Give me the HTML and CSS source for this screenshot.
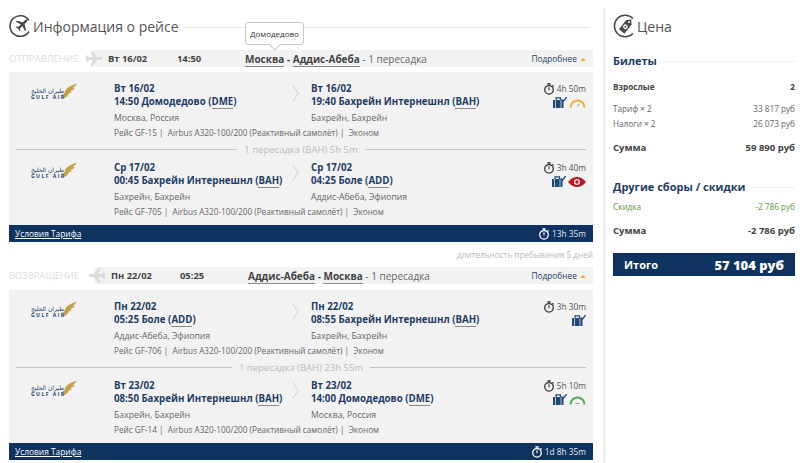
FILE: index.html
```html
<!doctype html>
<html>
  <head>
    <meta charset="UTF-8" />
    <title>Информация о рейсе</title>
    <link rel="stylesheet" href="styles.css">
  </head>
  <body>
    <svg class="defs" width="0" height="0">
      <defs>
        <symbol id="plane" viewBox="0 0 24 24">
          <path d="M21.5 3c-1-1-2.600-.8-3.700.3L14.300 6.800 4.500 4.400 3 5.900l8 4.300-3.800 3.800-3-.4L3 15l3.700 2.100L8.900 21l1.200-1.200-.4-3 3.800-3.800 4.300 8 1.500-1.500-2.400-9.800 3.500-3.500c1.100-1.100 2.100-3.700 1.100-2.700z" />
        </symbol>
        <symbol id="clock" viewBox="0 0 14 14">
          <circle cx="7" cy="8" r="5" fill="none" stroke="currentColor" stroke-width="1.500" />
          <path d="M5 1h4M7 1v2M7 5v3.500" fill="none" stroke="currentColor" stroke-width="1.300" />
          <path d="M11 2.500l1.500 1.500" stroke="currentColor" stroke-width="1.200" />
        </symbol>
        <symbol id="bag" viewBox="0 0 14 11">
          <path d="M0 3h10.500v8H0z" fill="#1c4a7a" />
          <path d="M3 3V.8h4.500V3" fill="none" stroke="#1c4a7a" stroke-width="1.200" />
          <path d="M2.500 3v8M8 3v8" stroke="#f2f2f2" stroke-width=".7" />
          <path d="M8.500 2.500l1.800 1.800L13.800 0" fill="none" stroke="#1c4a7a" stroke-width="1.400" />
        </symbol>
        <symbol id="falcon" viewBox="0 0 20 20">
          <path d="M19.500.5C15 2 11.500 3.500 8.500 6 6 8 5 10 4.500 12.500L0 15.500l3.500-.5L2 19.500c3-1 5-2 6.500-4 1-1.300 1.700-2.500 2-3.500 1 .5 2 .5 3 0-1-.5-1.500-1.300-1.500-2 2.500-.5 4.500-2 5.500-4-1 .5-2 .7-2.800.5C16.500 5 18.500 3 19.500.5z" />
        </symbol>
      </defs>
    </svg>

    <div class="page">
      <main class="flights">
        <div class="heading">
          <svg class="heading-icon" viewBox="0 0 24 24">
            <path d="M20 6.500A10.300 10.300 0 1 0 20 17.500" fill="none" stroke="#4a4a4a" stroke-width="1.600" />
            <use href="#plane" x="5" y="4" width="15" height="15" fill="#4a4a4a" />
          </svg>
          <h1>Информация о рейсе</h1>
          <span class="rule"></span>
        </div>

        <div class="summary-row">
          <span class="direction">ОТПРАВЛЕНИЕ</span>
          <svg class="direction-plane" viewBox="0 0 24 24"><path d="M0 10l2-3 3 3h5L7 1h3l6 9h5c2 0 3 1 3 2s-1 2-3 2h-5l-6 9H7l3-9H5l-3 3-2-3 1-2z" /></svg>
          <div class="summary">
            <b class="summary-date">Вт 16/02</b>
            <b class="summary-time">14:50</b>
            <span class="route">
              <span class="tooltip">Домодедово</span>
              <b class="abbr">Москва</b> <b>-</b> <b class="abbr">Аддис-Абеба</b> - 1 пересадка
            </span>
            <a class="more">Подробнее <i class="caret"></i></a>
          </div>
        </div>

        <section class="card">
          <div class="segment">
            <div class="logo">
              <svg class="falcon"><use href="#falcon" /></svg>
              <span class="logo-ar" lang="ar">طيران الخليج</span>
              <span class="logo-en">GULF AIR</span>
            </div>
            <div class="point">
              <strong>Вт 16/02<br>14:50 Домодедово (<span class="abbr">DME</span>)</strong>
              <p>Москва, Россия</p>
              <p class="flight">Рейс GF-15&nbsp;|&nbsp; Airbus A320-100/200 (Реактивный самолёт)&nbsp;|&nbsp; Эконом</p>
            </div>
            <svg class="chevron" viewBox="0 0 8 20"><path d="M1 1l6 9-6 9" /></svg>
            <div class="point">
              <strong>Вт 16/02<br>19:40 Бахрейн Интернешнл (<span class="abbr">BAH</span>)</strong>
              <p>Бахрейн, Бахрейн</p>
            </div>
            <div class="meta">
              <span class="duration"><svg class="clock"><use href="#clock" /></svg>4h 50m</span>
              <span class="meta-icons">
                <svg class="bag"><use href="#bag" /></svg>
                <svg class="gauge" viewBox="0 0 17 10"><path d="M1.500 9.500a7 7 0 0 1 14 0" stroke="#f0ac35" /><path d="M8 8.500l2.500-3" stroke="#999" stroke-width="1" /></svg>
              </span>
            </div>
          </div>
          <div class="layover"><span>1 пересадка (BAH) 5h 5m</span></div>
          <div class="segment">
            <div class="logo">
              <svg class="falcon"><use href="#falcon" /></svg>
              <span class="logo-ar" lang="ar">طيران الخليج</span>
              <span class="logo-en">GULF AIR</span>
            </div>
            <div class="point">
              <strong>Ср 17/02<br>00:45 Бахрейн Интернешнл (<span class="abbr">BAH</span>)</strong>
              <p>Бахрейн, Бахрейн</p>
              <p class="flight">Рейс GF-705&nbsp;|&nbsp; Airbus A320-100/200 (Реактивный самолёт)&nbsp;|&nbsp; Эконом</p>
            </div>
            <svg class="chevron" viewBox="0 0 8 20"><path d="M1 1l6 9-6 9" /></svg>
            <div class="point">
              <strong>Ср 17/02<br>04:25 Боле (<span class="abbr">ADD</span>)</strong>
              <p>Аддис-Абеба, Эфиопия</p>
            </div>
            <div class="meta">
              <span class="duration"><svg class="clock"><use href="#clock" /></svg>3h 40m</span>
              <span class="meta-icons">
                <svg class="bag"><use href="#bag" /></svg>
                <svg class="eye" viewBox="0 0 18 10"><path d="M0 5c3-3.500 5.500-5 9-5s6 1.500 9 5c-3 3.500-5.500 5-9 5S3 8.500 0 5z" fill="#c1121f" /><circle cx="9" cy="5" r="3" fill="#f2f2f2" /><circle cx="9" cy="5" r="1.700" fill="#c1121f" /></svg>
              </span>
            </div>
          </div>
          <div class="card-footer">
            <a>Условия Тарифа</a>
            <span class="duration"><svg class="clock"><use href="#clock" /></svg>13h 35m</span>
          </div>
        </section>

        <div class="stay">длительность пребывания 5 дней</div>

        <div class="summary-row return">
          <span class="direction">ВОЗВРАЩЕНИЕ</span>
          <svg class="direction-plane" viewBox="0 0 24 24"><path d="M0 10l2-3 3 3h5L7 1h3l6 9h5c2 0 3 1 3 2s-1 2-3 2h-5l-6 9H7l3-9H5l-3 3-2-3 1-2z" /></svg>
          <div class="summary">
            <b class="summary-date">Пн 22/02</b>
            <b class="summary-time">05:25</b>
            <span class="route">
              <b class="abbr">Аддис-Абеба</b> <b>-</b> <b class="abbr">Москва</b> - 1 пересадка
            </span>
            <a class="more">Подробнее <i class="caret"></i></a>
          </div>
        </div>

        <section class="card">
          <div class="segment">
            <div class="logo">
              <svg class="falcon"><use href="#falcon" /></svg>
              <span class="logo-ar" lang="ar">طيران الخليج</span>
              <span class="logo-en">GULF AIR</span>
            </div>
            <div class="point">
              <strong>Пн 22/02<br>05:25 Боле (<span class="abbr">ADD</span>)</strong>
              <p>Аддис-Абеба, Эфиопия</p>
              <p class="flight">Рейс GF-706&nbsp;|&nbsp; Airbus A320-100/200 (Реактивный самолёт)&nbsp;|&nbsp; Эконом</p>
            </div>
            <svg class="chevron" viewBox="0 0 8 20"><path d="M1 1l6 9-6 9" /></svg>
            <div class="point">
              <strong>Пн 22/02<br>08:55 Бахрейн Интернешнл (<span class="abbr">BAH</span>)</strong>
              <p>Бахрейн, Бахрейн</p>
            </div>
            <div class="meta">
              <span class="duration"><svg class="clock"><use href="#clock" /></svg>3h 30m</span>
              <span class="meta-icons">
                <svg class="bag"><use href="#bag" /></svg>
              </span>
            </div>
          </div>
          <div class="layover"><span>1 пересадка (BAH) 23h 55m</span></div>
          <div class="segment">
            <div class="logo">
              <svg class="falcon"><use href="#falcon" /></svg>
              <span class="logo-ar" lang="ar">طيران الخليج</span>
              <span class="logo-en">GULF AIR</span>
            </div>
            <div class="point">
              <strong>Вт 23/02<br>08:50 Бахрейн Интернешнл (<span class="abbr">BAH</span>)</strong>
              <p>Бахрейн, Бахрейн</p>
              <p class="flight">Рейс GF-14&nbsp;|&nbsp; Airbus A320-100/200 (Реактивный самолёт)&nbsp;|&nbsp; Эконом</p>
            </div>
            <svg class="chevron" viewBox="0 0 8 20"><path d="M1 1l6 9-6 9" /></svg>
            <div class="point">
              <strong>Вт 23/02<br>14:00 Домодедово (<span class="abbr">DME</span>)</strong>
              <p>Москва, Россия</p>
            </div>
            <div class="meta">
              <span class="duration"><svg class="clock"><use href="#clock" /></svg>5h 10m</span>
              <span class="meta-icons">
                <svg class="bag"><use href="#bag" /></svg>
                <svg class="gauge" viewBox="0 0 17 10"><path d="M1.500 9.500a7 7 0 0 1 14 0" stroke="#4caf50" /><path d="M6.500 8.500h4" stroke="#999" stroke-width="1" /></svg>
              </span>
            </div>
          </div>
          <div class="card-footer">
            <a>Условия Тарифа</a>
            <span class="duration"><svg class="clock"><use href="#clock" /></svg>1d 8h 35m</span>
          </div>
        </section>
      </main>

      <aside class="price">
        <div class="heading">
          <svg class="heading-icon" viewBox="0 0 24 24">
            <path d="M20 4.500A10.800 10.800 0 1 0 20 19.500" fill="none" stroke="#4a4a4a" stroke-width="1.500" />
            <g transform="rotate(38 13 12)">
              <path d="M9.500 7.500L13 3.500l3.500 4V19h-7z" fill="#4a4a4a" />
              <circle cx="13" cy="7" r="1" fill="#fff" />
              <circle cx="13" cy="13" r="2.300" fill="#fff" />
              <circle cx="13" cy="13" r="1" fill="#4a4a4a" />
            </g>
          </svg>
          <h1>Цена</h1>
        </div>

        <h2><span>Билеты</span><i class="rule"></i></h2>
        <div class="line strong"><span>Взрослые</span><span>2</span></div>
        <div class="line fare"><span>Тариф × 2</span><span>33 817 руб</span></div>
        <div class="line fare"><span>Налоги × 2</span><span>26 073 руб</span></div>
        <div class="line total"><span>Сумма</span><span>59 890 руб</span></div>

        <h2 class="other"><span>Другие сборы / скидки</span><i class="rule"></i></h2>
        <div class="line discount"><span>Скидка</span><span>-2 786 руб</span></div>
        <div class="line total"><span>Сумма</span><span>-2 786 руб</span></div>

        <div class="grand-total"><span>Итого</span><b>57 104 руб</b></div>
      </aside>
    </div>
  </body>
</html>
```

FILE: styles.css
```css
body,
html {
  height: 100%;
  margin: 0;
}

body {
  font-family: "Open Sans", "Noto Sans", sans-serif;
  background: #fff;
  color: #444;
  overflow: hidden;
}

.defs {
  display: block;
  height: 0;
}

.page {
  display: flex;
  height: 463px;
  padding-left: 9px;
  box-sizing: border-box;
}

.flights {
  width: 584px;
  flex: none;
}

/* Headings */
.heading {
  display: flex;
  align-items: center;
  height: 28px;
  margin-top: 12px;
}

.heading h1 {
  margin: 0;
  font-size: 14px;
  font-weight: 400;
  color: #555;
  white-space: nowrap;
}

.heading-icon {
  width: 24px;
  height: 24px;
  flex: none;
}

.heading .rule {
  flex: 1;
  height: 1px;
  margin: 3px 3px 0 6px;
  background: #e6e6e6;
}

/* Summary bar above each card */
.summary-row {
  display: flex;
  align-items: center;
  height: 17px;
  margin-top: 10px;
}

.direction {
  width: 72px;
  flex: none;
  font-size: 9.600px;
  color: #ddd;
}

.direction-plane {
  width: 22px;
  height: 17px;
  margin: 0 -11px 0 2px;
  flex: none;
  fill: #dcdcdc;
  position: relative;
}

.return .direction {
  font-size: 9.300px;
}

.return .direction-plane {
  transform: scaleX(-1);
  margin-left: 5px;
  margin-right: -14px;
}

.summary {
  flex: 1;
  display: flex;
  align-items: center;
  height: 17px;
  background: #f2f2f2;
  font-size: 9.400px;
  color: #666;
  padding-left: 14px;
  padding-right: 7px;
}

.return .summary {
  padding-left: 17px;
}

.summary b {
  color: #444;
  font-weight: 700;
}

.summary-date {
  width: 69px;
}

.summary-time {
  width: 68px;
}

.route {
  position: relative;
  flex: 1;
  font-size: 10px;
  white-space: nowrap;
}

.abbr {
  border-bottom: 1px solid #8a8a8a;
}

.more {
  font-size: 8.300px;
  color: #1d3d68;
}

.caret {
  display: inline-block;
  border: 3px solid transparent;
  border-top: 0;
  border-bottom: 3px solid #f0ac35;
  margin-left: 1px;
  vertical-align: 1px;
}

.tooltip {
  position: absolute;
  left: 0;
  top: -30px;
  padding: 3px 4px;
  height: 15px;
  line-height: 15px;
  font-size: 8px;
  color: #333;
  background: #fff;
  border: 1px solid #c8c8c8;
  border-radius: 3px;
}

.tooltip::after {
  content: "";
  position: absolute;
  left: 25px;
  bottom: -5px;
  width: 7px;
  height: 7px;
  background: #fff;
  border-right: 1px solid #c8c8c8;
  border-bottom: 1px solid #c8c8c8;
  transform: rotate(45deg);
}

/* Flight card */
.card {
  margin-top: 5px;
  background: #f2f2f2;
}

.return + .card {
  margin-top: 6px;
}

.segment {
  display: grid;
  grid-template-columns: 105px 176px 21px 1fr auto;
  box-sizing: border-box;
  height: 73px;
  padding: 10px 7px 0 0;
}

.layover + .segment {
  height: 71px;
  padding-top: 7px;
}

.logo {
  position: relative;
  height: 24px;
  color: #1d3d68;
}

.falcon {
  position: absolute;
  left: 52px;
  top: 0;
  width: 16px;
  height: 18px;
  fill: #c9a04a;
}

.logo-ar {
  position: absolute;
  left: 22px;
  top: 4px;
  width: 30px;
  font-family: "DejaVu Sans", sans-serif;
  font-size: 6px;
  line-height: 9px;
  white-space: nowrap;
}

.logo-en {
  position: absolute;
  left: 22px;
  top: 12px;
  font-size: 5px;
  line-height: 7px;
  font-weight: 700;
  letter-spacing: 1.500px;
  white-space: nowrap;
}

.point {
  white-space: nowrap;
}

.point strong {
  display: block;
  font-size: 9.700px;
  line-height: 13px;
  color: #1d3d68;
}

.point p {
  margin: 4px 0 0;
  font-size: 8.700px;
  line-height: 12px;
  color: #666;
}

.point p.flight {
  margin-top: 3px;
  font-size: 8.200px;
}

.chevron {
  width: 7px;
  height: 19px;
  margin: 2px 0 0 2px;
  fill: none;
  stroke: #c8c8c8;
}

.meta {
  display: flex;
  flex-direction: column;
  align-items: flex-end;
  gap: 2px;
}

.duration {
  display: flex;
  align-items: center;
  gap: 2px;
  font-size: 8.300px;
  line-height: 13px;
  color: #555;
}

.clock {
  width: 12px;
  height: 12px;
  color: #333;
}

.meta-icons {
  display: flex;
  align-items: center;
  gap: 2px;
  height: 11px;
}

.bag {
  width: 14px;
  height: 11px;
}

.gauge {
  width: 17px;
  height: 10px;
  fill: none;
  stroke-width: 2;
}

.eye {
  width: 18px;
  height: 10px;
}

.layover {
  display: flex;
  align-items: center;
  gap: 7px;
  height: 9px;
  padding: 0 7px;
  font-size: 9.500px;
  color: #bbb;
}

.layover::before,
.layover::after {
  content: "";
  flex: 1;
  height: 1px;
  background: #c4c4c4;
}

.card-footer {
  display: flex;
  align-items: center;
  justify-content: space-between;
  height: 17px;
  padding: 0 7px 0 6px;
  background: #0f3360;
  font-size: 8.400px;
  color: #fff;
}

.card-footer a {
  text-decoration: underline;
}

.card-footer .duration {
  color: #e5e9ef;
}

.card-footer .clock {
  color: #fff;
}

.stay {
  height: 25px;
  line-height: 26px;
  text-align: right;
  font-size: 8.200px;
  color: #bbb;
}

.stay + .summary-row {
  margin-top: 0;
}

/* Price column */
.price {
  width: 182px;
  margin: 8px 0 0 10px;
  padding-left: 7px;
  border-left: 3px solid #f0f0f0;
}

.price .heading {
  margin-top: 4px;
}

.price h2 {
  display: flex;
  align-items: center;
  margin: 13px 0 0;
  font-size: 11px;
  line-height: 16px;
  font-weight: 700;
  color: #1d3d68;
}

.price h2 .rule {
  flex: 1;
  height: 1px;
  margin-left: 6px;
  background: #efefef;
}

.price h2.other {
  margin-top: 24px;
}

.line {
  display: flex;
  justify-content: space-between;
  font-size: 8.200px;
  line-height: 14px;
  color: #666;
}

.line.fare {
  margin-top: 1px;
}

.line.strong {
  font-weight: 700;
  color: #444;
  margin-top: 11px;
}

.line.strong + .fare {
  margin-top: 8px;
}

.line.total {
  margin-top: 10px;
  font-size: 9.500px;
  font-weight: 700;
  color: #444;
}

.line.discount {
  margin-top: 5px;
  color: #5b9a3c;
}

.grand-total {
  display: flex;
  align-items: center;
  justify-content: space-between;
  height: 23px;
  margin-top: 15px;
  padding: 0 11px;
  background: #0f3360;
  color: #fff;
  font-size: 11px;
  font-weight: 700;
}

.grand-total b {
  font-size: 13px;
}
```
